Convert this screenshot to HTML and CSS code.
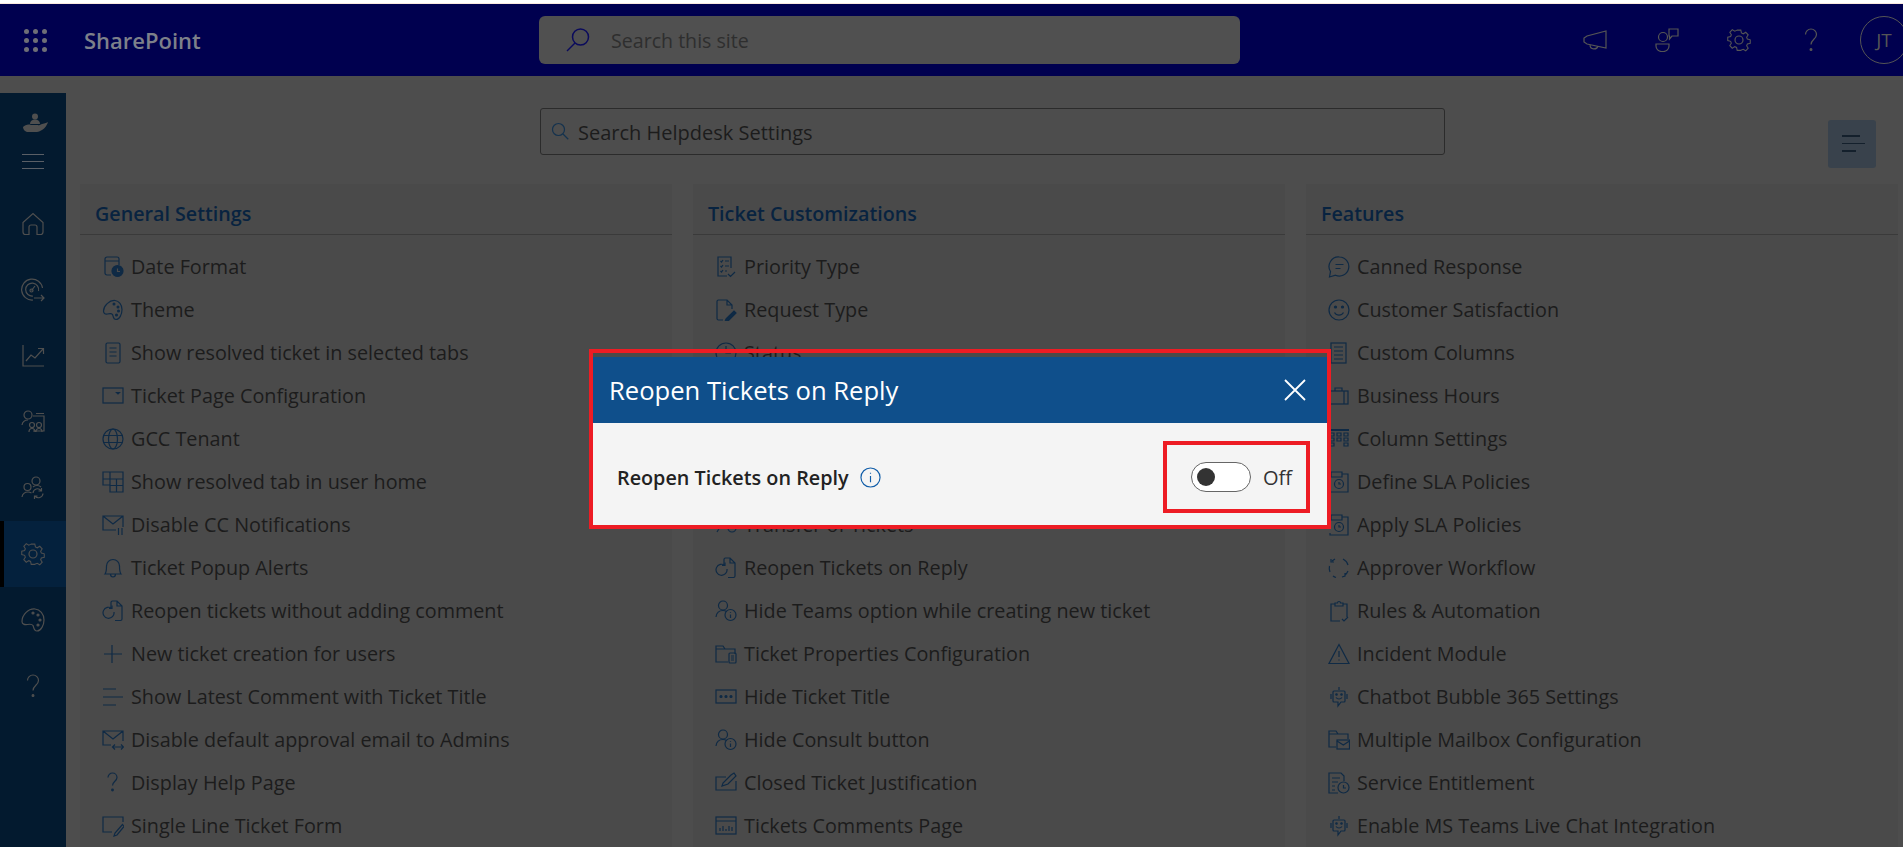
FILE: index.html
```html
<!DOCTYPE html>
<html lang="en">

<head>
    <meta charset="UTF-8">
    <meta name="viewport" content="width=device-width, initial-scale=1.0">
    <title>Helpdesk Settings</title>
    <link rel="stylesheet" href="styles.css">
</head>

<body>
    <!-- icon sprite -->
    <svg class="sprite" xmlns="http://www.w3.org/2000/svg">
        <symbol id="i-date" viewBox="0 0 22 22"><path d="M9 19H5a2 2 0 0 1-2-2V3a2 2 0 0 1 2-2h10a2 2 0 0 1 2 2v6M3 5h14"/><circle cx="15.500" cy="15" r="5.500" fill="currentColor"/><path d="M15.500 12.500v3h2.500" stroke="#4a4a4a"/></symbol>
        <symbol id="i-palette" viewBox="0 0 22 22"><path d="M13 1.500c4 .5 7 4 7 9 0 5-2.500 10-6 10-3 0-2.500-3-3.500-5-1-1.500-3-1-5-.5-2.500.5-4-1-4-3 0-5 6-11 11.500-10.500z"/><circle cx="12" cy="5" r=".9" fill="currentColor"/><circle cx="16" cy="8" r=".9" fill="currentColor"/><circle cx="16.500" cy="12" r=".9" fill="currentColor"/><circle cx="14.500" cy="16" r=".9" fill="currentColor"/></symbol>
        <symbol id="i-doc" viewBox="0 0 22 22"><rect x="4" y="1" width="14" height="20" rx="1.500"/><path d="M7.500 6h7M7.500 10h7M7.500 14h7"/></symbol>
        <symbol id="i-page" viewBox="0 0 22 22"><rect x="1" y="3" width="20" height="15"/><path d="M14.500 7.500h3l-1.500 1.500z" fill="currentColor"/></symbol>
        <symbol id="i-globe" viewBox="0 0 22 22"><circle cx="11" cy="11" r="10"/><ellipse cx="11" cy="11" rx="4.500" ry="10"/><path d="M1.500 7.500h19M1.500 14.500h19"/></symbol>
        <symbol id="i-table" viewBox="0 0 22 22"><path d="M1 1h20v7H1zM1 8v6h7M8 1v20h13V8M14.500 8v13M8 14.500h13"/></symbol>
        <symbol id="i-mailpause" viewBox="0 0 22 22"><path d="M14 16H1V2h20v11M1 2l10 8 10-8M16.500 14v7M20 14v7"/></symbol>
        <symbol id="i-bell" viewBox="0 0 22 22"><path d="M3 17c1.500-2 1.500-4 1.500-8a6.500 6.500 0 0 1 13 0c0 4 0 6 1.500 8zM8.500 17c0 4 5 4 5 0"/></symbol>
        <symbol id="i-reopen" viewBox="0 0 22 22"><path d="M9 7V2.500A1.500 1.500 0 0 1 10.500 1H15l5 5v13a1.500 1.500 0 0 1-1.500 1.500H13M15 1v5h5"/><path d="M12 12a5.500 5.500 0 1 1-2-3.500M10 5.500v3h-3"/></symbol>
        <symbol id="i-plus" viewBox="0 0 22 22"><path d="M10 2v18M2 11h18"/></symbol>
        <symbol id="i-lines" viewBox="0 0 22 22"><path d="M1 3h13M1 11h20M1 19h13"/></symbol>
        <symbol id="i-mailarrows" viewBox="0 0 22 22"><path d="M9 16H1V2h20v10M1 2l10 8 10-8M11 18h10M13 15.500 10.500 18l2.500 2.500M19 15.500l2.500 2.500-2.500 2.500"/></symbol>
        <symbol id="i-question" viewBox="0 0 22 22"><path d="M6 5.500C6 3 8 1 10.500 1S15 3 15 5.500c0 3.500-4.500 4-4.500 8"/><circle cx="10.500" cy="18" r=".8" fill="currentColor"/></symbol>
        <symbol id="i-form" viewBox="0 0 22 22"><path d="M10 17H1V2h20v5M20.500 9.500 13 18l-1 3 3-1 7-8.500z"/></symbol>
        <symbol id="i-checklist" viewBox="0 0 22 22"><path d="M12 20H3V1h13v11"/><path d="M5.500 5l1 1 1.500-2M5.500 10l1 1 1.500-2M5.500 15l1 1 1.500-2M10 5h4M10 10h4M10 15h2M13 18l2.500 2.500L20 16"/></symbol>
        <symbol id="i-docpen" viewBox="0 0 22 22"><path d="M8 21H3.500A1.500 1.500 0 0 1 2 19.500v-17A1.500 1.500 0 0 1 3.500 1H12l5 5v4M12 1v5h5"/><path d="m11 20 8-8 2 2-8 8-3 .5z" fill="currentColor"/></symbol>
        <symbol id="i-clock" viewBox="0 0 22 22"><circle cx="11" cy="11" r="10"/><path d="M11 4v7h5"/></symbol>
        <symbol id="i-transfer" viewBox="0 0 22 22"><path d="M2 18 8 8M8 8v5M8 8H3M13 3v11a4 4 0 1 0 4-4"/></symbol>
        <symbol id="i-userinfo" viewBox="0 0 22 22"><circle cx="8" cy="5.500" r="4.500"/><path d="M1 17c.5-4 3-6.500 7-6.500 1.500 0 2.500.3 3.500 1"/><circle cx="15.500" cy="15" r="5.500"/><path d="M15.500 14.500V18M15.500 12v.8"/></symbol>
        <symbol id="i-folderdoc" viewBox="0 0 22 22"><path d="M13 19H1V3h7l2 3h10v5M1 6h9"/><rect x="14" y="10" width="7" height="10" rx="1"/><path d="M16 13h3M16 15h3M16 17h3"/></symbol>
        <symbol id="i-dots" viewBox="0 0 22 22"><rect x="1" y="4" width="20" height="13"/><circle cx="6" cy="10.500" r="1" fill="currentColor"/><circle cx="11" cy="10.500" r="1" fill="currentColor"/><circle cx="16" cy="10.500" r="1" fill="currentColor"/></symbol>
        <symbol id="i-edit" viewBox="0 0 22 22"><path d="M11 5H1v13h20V9M7 14l1-3L16 3l3-2 2 3-8 8z"/></symbol>
        <symbol id="i-chart" viewBox="0 0 22 22"><rect x="1" y="2" width="20" height="17"/><path d="M1 6h20M5 16v-3M8 16v-5M11 16v-2M14 16v-5M17 16v-4"/></symbol>
        <symbol id="i-chat" viewBox="0 0 22 22"><path d="M11.500 1a9.500 9.500 0 1 1-4 18.200L1.500 21l1-5.500A9.500 9.500 0 0 1 11.500 1z"/><path d="M7.500 8.500h8M7.500 12.500h5"/></symbol>
        <symbol id="i-smile" viewBox="0 0 22 22"><circle cx="11" cy="11" r="10"/><circle cx="7.500" cy="8" r="1" fill="currentColor"/><circle cx="14.500" cy="8" r="1" fill="currentColor"/><path d="M6.500 13.500c2 3.500 7 3.500 9 0"/></symbol>
        <symbol id="i-columns" viewBox="0 0 22 22"><rect x="3" y="1" width="15" height="20"/><path d="M6 5h9M6 9h9M6 13h9M6 17h9"/></symbol>
        <symbol id="i-brief" viewBox="0 0 22 22"><rect x="2" y="6" width="18" height="13"/><path d="M7 6V3h7v3M16 6v13"/></symbol>
        <symbol id="i-grid" viewBox="0 0 22 22"><path d="M1 2h20" stroke-width="2"/><path d="M2 5h4v3H2zM9 5h4v3H9zM16 5h4v3h-4zM2 10h4v3H2zM9 10h4v3H9zM16 10h4v3h-4zM2 15h4v3H2zM16 15h4v3h-4z"/></symbol>
        <symbol id="i-sla" viewBox="0 0 22 22"><path d="M3 1h11v5H3zM14 3h6v18H2v-2"/><circle cx="11" cy="13" r="4.500"/><path d="M11 11v2h2"/></symbol>
        <symbol id="i-flow" viewBox="0 0 22 22"><path d="M2 15a10 10 0 0 1-.5-6M4 4l3-2M15 2a10 10 0 0 1 5 6M20 14a10 10 0 0 1-3 4M8 20.500a10 10 0 0 1-3-1.500M3 2v3h3M14 20l3-1v-3"/></symbol>
        <symbol id="i-clip" viewBox="0 0 22 22"><path d="M12 21H3V4h4M15 4h4v13"/><path d="M7 6V3h2.500a1.500 1.500 0 0 1 3 0H15v3zM14 19l2 2 4-4"/></symbol>
        <symbol id="i-warn" viewBox="0 0 22 22"><path d="M11 1.500 21 20.500H1z"/><path d="M11 8v6M11 16.500v1"/></symbol>
        <symbol id="i-bot" viewBox="0 0 22 22"><path d="M11 1v3M6 5h10a1 1 0 0 1 1 1v9a1 1 0 0 1-1 1h-3l-3 4v-4H6a1 1 0 0 1-1-1V6a1 1 0 0 1 1-1zM3 8v5M19 8v5M8 11.500c1.500 2 4.500 2 6 0"/><circle cx="8.500" cy="8.500" r=".7" fill="currentColor"/><circle cx="13.500" cy="8.500" r=".7" fill="currentColor"/></symbol>
        <symbol id="i-foldermail" viewBox="0 0 22 22"><path d="M8 18H1V2h7l2 3h10v5M1 5h9"/><rect x="9" y="11" width="12.500" height="9"/><path d="m9 12 6.300 4 6.200-4"/></symbol>
        <symbol id="i-docclock" viewBox="0 0 22 22"><path d="M10 21H1V1h12l3 3v5M4 6h8M4 10h6M4 14h3M4 18h3"/><circle cx="15.500" cy="15.500" r="5.500"/><path d="M15.500 13v3h2.500"/></symbol>

        <symbol id="n-logo" viewBox="0 0 26 20"><circle cx="13" cy="3.500" r="3" fill="currentColor" stroke="none"/><path d="M8 11c0-3 2-4.500 5-4.500s5 1.500 5 4.500z" fill="currentColor" stroke="none"/><path d="M1 14c2-2 5-3 8-2h7c1 0 1 2 0 2h-3l7-3c3-1 5-1 6-2-1 4-5 9-11 10H6c-2 0-5-2-5-5z" fill="currentColor" stroke="none"/></symbol>
        <symbol id="n-home" viewBox="0 0 24 24"><path d="M2 10.500 12 1.500l10 9V20a2.500 2.500 0 0 1-2.500 2.500H16V15a2 2 0 0 0-2-2h-4a2 2 0 0 0-2 2v7.500H4.500A2.500 2.500 0 0 1 2 20z"/></symbol>
        <symbol id="n-gauge" viewBox="0 0 24 24"><path d="M12 22A10.500 10.500 0 1 1 21.500 10"/><path d="M12 18a6.500 6.500 0 1 1 5.500-5M10.500 12.500 14 8"/><circle cx="10.500" cy="12.500" r="1.500"/><path d="M13 20h10M20 17l3 3-3 3"/></symbol>
        <symbol id="n-chart" viewBox="0 0 24 24"><path d="M2 1v21h21M5 17l5-6 4 3 8-9M17 4.500h5.500V10"/></symbol>
        <symbol id="n-users" viewBox="0 0 24 24"><circle cx="7" cy="5" r="4"/><path d="M1 15c.5-3 2.500-5 6-5"/><path d="M12 6h11v15H12M15 3.500h8"/><circle cx="11" cy="15" r="2.500"/><circle cx="18" cy="15" r="2.500"/><path d="M8 22c0-2 1-3.500 3-3.500s3 1.500 3 3.500M15 22c0-2 1-3.500 3-3.500s3 1.500 3 3.500"/></symbol>
        <symbol id="n-sync" viewBox="0 0 24 24"><circle cx="15" cy="5" r="4"/><circle cx="6.500" cy="11" r="3.500"/><path d="M1 21c.5-3 2.500-5 6-5 1.500 0 2.500.4 3.500 1M12 11c1-1 2-1.500 4-1.500 1.500 0 3 .5 4 1.500"/><path d="M12 17a4.500 4.500 0 0 1 8-2.500M22 17.500a4.500 4.500 0 0 1-8 2.500M20.500 12v3h-3M13.500 23v-3h3"/></symbol>
        <symbol id="n-gear" viewBox="0 0 24 24"><circle cx="12" cy="12" r="4"/><path d="M10 1h4l.7 3.200 2 .9 2.800-1.700 2.700 2.900-1.700 2.700.8 2 3.200.8v3.800l-3.200.8-.8 2 1.700 2.700-2.700 2.900-2.800-1.700-2 .9L14 23.500h-4l-.7-3.200-2-.9-2.800 1.700-2.700-2.900 1.700-2.700-.8-2-3.200-.8v-3.800l3.200-.8.8-2-1.700-2.700 2.700-2.900 2.800 1.700 2-.9z" transform="translate(1.200 1.200) scale(.9)"/></symbol>
        <symbol id="n-palette" viewBox="0 0 24 24"><path d="M14 1c5 .5 9 5 9 11 0 5-3 11-7 11-3.500 0-3-3.500-4-5.500-1-1.500-3-1.500-5.500-1-3 .5-5.500-.5-5.500-3C1 7 7 .5 14 1z"/><circle cx="12" cy="5" r="1" fill="currentColor"/><circle cx="17" cy="7" r="1" fill="currentColor"/><circle cx="19" cy="12" r="1" fill="currentColor"/><circle cx="17" cy="17" r="1" fill="currentColor"/></symbol>
        <symbol id="n-question" viewBox="0 0 24 24"><path d="M6.500 6.500C6.500 3.500 9 1 12 1s5.500 2.500 5.500 5.500c0 4.500-5.500 5-5.500 10"/><circle cx="12" cy="21.500" r=".9" fill="currentColor"/></symbol>
        <symbol id="t-mega" viewBox="0 0 24 22"><path d="M1 9v4l3 2 19 4V2L4 7zM7 16c0 5 7 5 8 1"/></symbol>
        <symbol id="t-teams" viewBox="0 0 24 24"><circle cx="8" cy="9" r="4.500"/><path d="M1 16h13v2a5.500 5.500 0 0 1-5.500 5.500h-2A5.500 5.500 0 0 1 1 18zM14 1h9v7h-6l-2.500 3V8H14z"/></symbol>
    </svg>

    <div class="top-line"></div>

    <header class="suite-bar">
        <div class="waffle">
            <i></i><i></i><i></i><i></i><i></i><i></i><i></i><i></i><i></i>
        </div>
        <div class="brand">SharePoint</div>
        <div class="site-search">
            <svg class="site-search-icon" viewBox="0 0 24 24"><circle cx="14.500" cy="9" r="8"/><path d="M9 15 1 23"/></svg>
            <span>Search this site</span>
        </div>
        <div class="suite-actions">
            <svg class="act act-mega"><use href="#t-mega"/></svg>
            <svg class="act"><use href="#t-teams"/></svg>
            <svg class="act"><use href="#n-gear"/></svg>
            <svg class="act"><use href="#n-question"/></svg>
            <div class="avatar">JT</div>
        </div>
    </header>

    <div class="app">
        <nav class="side">
            <div class="side-top">
                <svg class="side-logo"><use href="#n-logo"/></svg>
                <div class="burger"><i></i><i></i><i></i></div>
            </div>
            <a class="side-item"><svg><use href="#n-home"/></svg></a>
            <a class="side-item"><svg><use href="#n-gauge"/></svg></a>
            <a class="side-item"><svg><use href="#n-chart"/></svg></a>
            <a class="side-item"><svg><use href="#n-users"/></svg></a>
            <a class="side-item"><svg><use href="#n-sync"/></svg></a>
            <a class="side-item active"><svg><use href="#n-gear"/></svg></a>
            <a class="side-item"><svg><use href="#n-palette"/></svg></a>
            <a class="side-item"><svg><use href="#n-question"/></svg></a>
        </nav>

        <main class="content">
            <div class="toolbar">
                <div class="settings-search">
                    <svg viewBox="0 0 24 24"><circle cx="10" cy="10" r="8"/><path d="m16 16 7 7"/></svg>
                    <span>Search Helpdesk Settings</span>
                </div>
                <button class="list-toggle"><i></i><i></i><i></i></button>
            </div>

            <div class="columns">
                <section class="card">
                    <h2>General Settings</h2>
                    <ul>
                        <li><svg><use href="#i-date"/></svg>Date Format</li>
                        <li><svg><use href="#i-palette"/></svg>Theme</li>
                        <li><svg><use href="#i-doc"/></svg>Show resolved ticket in selected tabs</li>
                        <li><svg><use href="#i-page"/></svg>Ticket Page Configuration</li>
                        <li><svg><use href="#i-globe"/></svg>GCC Tenant</li>
                        <li><svg><use href="#i-table"/></svg>Show resolved tab in user home</li>
                        <li><svg><use href="#i-mailpause"/></svg>Disable CC Notifications</li>
                        <li><svg><use href="#i-bell"/></svg>Ticket Popup Alerts</li>
                        <li><svg><use href="#i-reopen"/></svg>Reopen tickets without adding comment</li>
                        <li><svg><use href="#i-plus"/></svg>New ticket creation for users</li>
                        <li><svg><use href="#i-lines"/></svg>Show Latest Comment with Ticket Title</li>
                        <li><svg><use href="#i-mailarrows"/></svg>Disable default approval email to Admins</li>
                        <li><svg><use href="#i-question"/></svg>Display Help Page</li>
                        <li><svg><use href="#i-form"/></svg>Single Line Ticket Form</li>
                    </ul>
                </section>

                <section class="card">
                    <h2>Ticket Customizations</h2>
                    <ul>
                        <li><svg><use href="#i-checklist"/></svg>Priority Type</li>
                        <li><svg><use href="#i-docpen"/></svg>Request Type</li>
                        <li><svg><use href="#i-clock"/></svg>Status</li>
                        <li></li>
                        <li></li>
                        <li></li>
                        <li><svg><use href="#i-transfer"/></svg>Transfer of Tickets</li>
                        <li><svg><use href="#i-reopen"/></svg>Reopen Tickets on Reply</li>
                        <li><svg><use href="#i-userinfo"/></svg>Hide Teams option while creating new ticket</li>
                        <li><svg><use href="#i-folderdoc"/></svg>Ticket Properties Configuration</li>
                        <li><svg><use href="#i-dots"/></svg>Hide Ticket Title</li>
                        <li><svg><use href="#i-userinfo"/></svg>Hide Consult button</li>
                        <li><svg><use href="#i-edit"/></svg>Closed Ticket Justification</li>
                        <li><svg><use href="#i-chart"/></svg>Tickets Comments Page</li>
                    </ul>
                </section>

                <section class="card">
                    <h2>Features</h2>
                    <ul>
                        <li><svg><use href="#i-chat"/></svg>Canned Response</li>
                        <li><svg><use href="#i-smile"/></svg>Customer Satisfaction</li>
                        <li><svg><use href="#i-columns"/></svg>Custom Columns</li>
                        <li><svg><use href="#i-brief"/></svg>Business Hours</li>
                        <li><svg><use href="#i-grid"/></svg>Column Settings</li>
                        <li><svg><use href="#i-sla"/></svg>Define SLA Policies</li>
                        <li><svg><use href="#i-sla"/></svg>Apply SLA Policies</li>
                        <li><svg><use href="#i-flow"/></svg>Approver Workflow</li>
                        <li><svg><use href="#i-clip"/></svg>Rules &amp; Automation</li>
                        <li><svg><use href="#i-warn"/></svg>Incident Module</li>
                        <li><svg><use href="#i-bot"/></svg>Chatbot Bubble 365 Settings</li>
                        <li><svg><use href="#i-foldermail"/></svg>Multiple Mailbox Configuration</li>
                        <li><svg><use href="#i-docclock"/></svg>Service Entitlement</li>
                        <li><svg><use href="#i-bot"/></svg>Enable MS Teams Live Chat Integration</li>
                    </ul>
                </section>
            </div>
        </main>
    </div>

    <!-- red frames are the callouts drawn on the screenshot -->
    <div class="dialog-frame">
        <div class="dialog">
            <div class="dialog-head">
                <span>Reopen Tickets on Reply</span>
                <svg class="dialog-close" viewBox="0 0 22 22"><path d="m1 1 20 20M21 1 1 21"/></svg>
            </div>
            <div class="dialog-body">
                <div class="dialog-label">
                    <span>Reopen Tickets on Reply</span>
                    <svg class="info" viewBox="0 0 22 22"><circle cx="11" cy="11" r="10"/><path d="M11 9.500V16M11 6v1.200"/></svg>
                </div>
                <div class="toggle-mark">
                    <div class="toggle"><i></i></div>
                    <span>Off</span>
                </div>
            </div>
        </div>
    </div>
</body>

</html>
```

FILE: styles.css
```css
* {
    box-sizing: border-box;
}

body {
    margin: 0;
    height: 847px;
    overflow: hidden;
    background-color: #4d4d4d;
    font-family: "Open Sans", "Noto Sans", sans-serif;
    color: #1c1c1c;
}

ul {
    padding: 0;
    margin: 0;
    list-style: none;
}

.sprite {
    display: none;
}

svg {
    fill: none;
    stroke: currentColor;
    stroke-width: 1.2;
}

/* top bar */
.top-line {
    height: 4px;
    background-color: #fff;
    border-bottom: 1px solid #fbe9df;
}

.suite-bar {
    display: flex;
    align-items: center;
    height: 72px;
    background-color: #00004f;
    color: #555;
}

.suite-bar > * {
    flex: none;
}

.waffle {
    display: grid;
    grid-template-columns: repeat(3, 5px);
    gap: 4px;
    margin-left: 24px;
}

.waffle i {
    width: 5px;
    height: 5px;
    border-radius: 50%;
    background-color: #6e6e76;
}

.brand {
    width: 455px;
    margin-left: 37px;
    font-size: 22px;
    font-weight: 600;
    color: #7d808a;
}

.site-search {
    display: flex;
    align-items: center;
    width: 701px;
    height: 48px;
    padding-left: 27px;
    border-radius: 6px;
    background-color: #505050;
    font-size: 19.6px;
    color: #2e2e2e;
}

.site-search-icon {
    width: 24px;
    height: 24px;
    margin-right: 21px;
    color: #0b0b5c;
    stroke-width: 1.5;
}

.suite-actions {
    display: flex;
    align-items: center;
    margin-left: 343px;
}

.act {
    flex: none;
    width: 24px;
    height: 24px;
    margin-right: 48px;
}

.act-mega {
    height: 22px;
}

.avatar {
    flex: none;
    width: 48px;
    height: 48px;
    margin-left: -11px;
    border: 1px solid #555;
    border-radius: 50%;
    line-height: 46px;
    text-align: center;
    font-size: 19px;
}

/* page */
.app {
    display: flex;
    height: 771px;
}

.side {
    flex: none;
    width: 66px;
    margin-top: 17px;
    background-color: #031a2f;
    color: #4f4f4f;
}

.side-top {
    height: 98px;
    padding-top: 20px;
}

.side-logo {
    display: block;
    width: 26px;
    height: 20px;
    margin: 0 0 0 22px;
}

.burger {
    display: flex;
    flex-direction: column;
    gap: 6px;
    width: 22px;
    margin: 21px 0 0 22px;
}

.burger i {
    height: 1px;
    background-color: #5a5f66;
}

.side-item {
    display: flex;
    align-items: center;
    justify-content: center;
    height: 66px;
    border-left: 4px solid transparent;
    padding-right: 4px;
}

.side-item svg {
    width: 24px;
    height: 24px;
}

.side-item.active {
    background-color: #04213d;
    border-left: 4px solid #000;
}

.content {
    flex: 1;
    padding: 32px 5px 0 14px;
}

.toolbar {
    display: flex;
    align-items: flex-start;
    height: 76px;
}

.settings-search {
    display: flex;
    align-items: center;
    width: 905px;
    height: 47px;
    margin-left: 460px;
    padding: 2px 0 0 10px;
    border: 1px solid #2b2b2b;
    border-radius: 3px;
    font-size: 20px;
}

.settings-search svg {
    width: 18px;
    height: 18px;
    margin: -3px 9px 0 0;
    color: #14324e;
    stroke-width: 1.6;
}

.list-toggle {
    display: flex;
    flex-direction: column;
    align-items: flex-start;
    gap: 6px;
    width: 48px;
    height: 48px;
    margin: 12px 0 0 auto;
    margin-right: 22px;
    padding: 15px 0 0 14px;
    border: 0;
    border-radius: 3px;
    background-color: #39424c;
}

.list-toggle i {
    width: 18px;
    height: 1.5px;
    background-color: #14202c;
}

.list-toggle i:nth-child(2) {
    width: 23px;
}

.list-toggle i:nth-child(3) {
    width: 14px;
}

.columns {
    display: grid;
    grid-template-columns: repeat(3, 1fr);
    column-gap: 21px;
}

.card {
    background-color: #4a4a4a;
}

.card h2 {
    height: 51px;
    margin: 0;
    padding: 15px 0 0 15px;
    border-bottom: 1px solid #3a3a3a;
    font-size: 19.7px;
    line-height: 30px;
    font-weight: 600;
    color: #082340;
}

.card ul {
    padding-top: 10px;
}

.card li {
    display: flex;
    align-items: center;
    height: 43px;
    padding-left: 22px;
    font-size: 19.8px;
    color: #1c1c1c;
    white-space: nowrap;
}

.card li svg {
    flex: none;
    width: 22px;
    height: 22px;
    margin-right: 7px;
    color: #0f2a45;
}

/* dialog */
.dialog-frame {
    position: absolute;
    left: 589px;
    top: 349px;
    width: 742px;
    height: 180px;
    padding-top: 4px;
    border: 4px solid #ed1c24;
}

.dialog {
    height: 100%;
}

.dialog-head {
    display: flex;
    align-items: center;
    justify-content: space-between;
    height: 66px;
    padding: 0 21px 0 16px;
    background-color: #0f4f8b;
    font-size: 25.6px;
    color: #fff;
}

.dialog-close {
    width: 22px;
    height: 22px;
    stroke-width: 1.8;
}

.dialog-body {
    display: flex;
    align-items: center;
    justify-content: space-between;
    height: 102px;
    padding: 6px 17px 0 24px;
    background-color: #f4f4f4;
}

.dialog-label {
    display: flex;
    align-items: center;
    gap: 11px;
    font-size: 19.8px;
    font-weight: 600;
    color: #222;
}

.info {
    width: 21px;
    height: 21px;
    color: #0f5ca8;
}

.toggle-mark {
    display: flex;
    align-items: center;
    justify-content: flex-end;
    gap: 12px;
    width: 147px;
    height: 72px;
    padding-right: 14px;
    border: 4px solid #ed1c24;
    font-size: 20px;
    color: #333;
}

.toggle {
    display: flex;
    align-items: center;
    width: 60px;
    height: 30px;
    padding-left: 5px;
    border: 1px solid #666;
    border-radius: 15px;
    background-color: #fff;
}

.toggle i {
    width: 18px;
    height: 18px;
    border-radius: 50%;
    background-color: #333;
}
```
